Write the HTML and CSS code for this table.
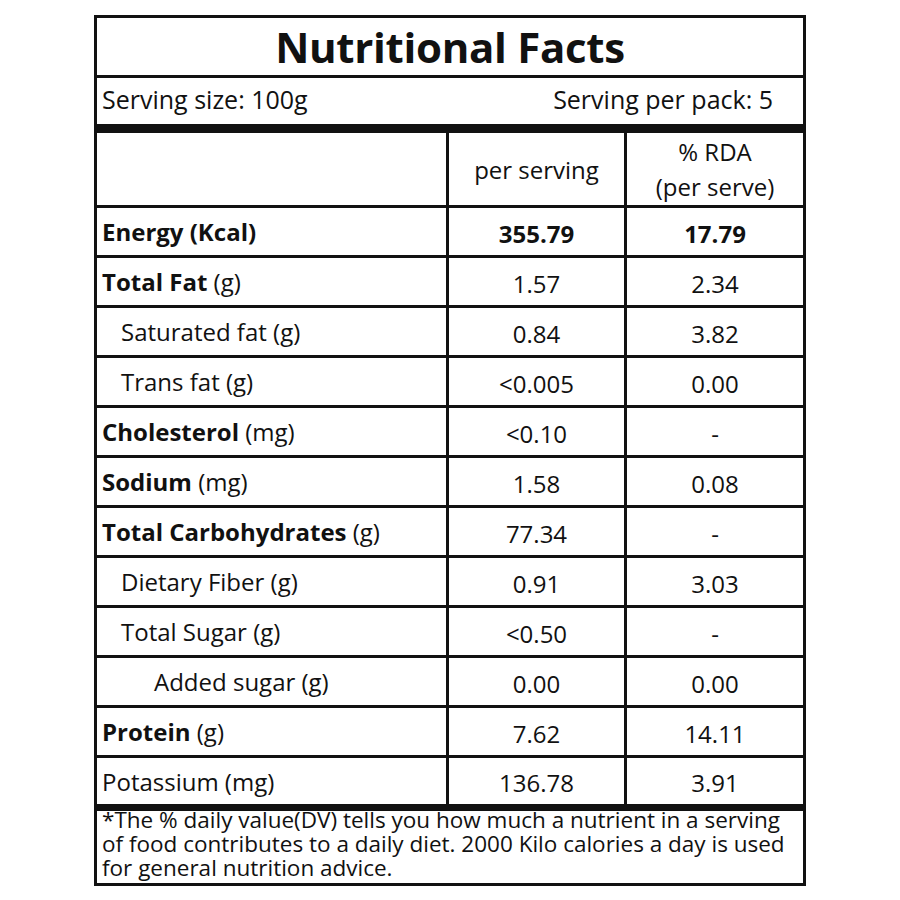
FILE: index.html
```html
<!DOCTYPE html>
<html>
<head>
<meta charset="utf-8">
<link rel="stylesheet" href="styles.css">
</head>
<body>
<div class="label">
  <h1 class="title">Nutritional Facts</h1>
  <div class="serving"><span>Serving size: 100g</span><span>Serving per pack: 5</span></div>
  <div class="table">
    <div class="row head">
      <div class="cell name"></div>
      <div class="cell val"><span>per serving</span></div>
      <div class="cell val"><span>% RDA<br>(per serve)</span></div>
    </div>
    <div class="row">
      <div class="cell name"><span><b>Energy (Kcal)</b></span></div>
      <div class="cell val"><span><b>355.79</b></span></div>
      <div class="cell val"><span><b>17.79</b></span></div>
    </div>
    <div class="row">
      <div class="cell name"><span><b>Total Fat</b> (g)</span></div>
      <div class="cell val"><span>1.57</span></div>
      <div class="cell val"><span>2.34</span></div>
    </div>
    <div class="row">
      <div class="cell name ind1"><span>Saturated fat (g)</span></div>
      <div class="cell val"><span>0.84</span></div>
      <div class="cell val"><span>3.82</span></div>
    </div>
    <div class="row">
      <div class="cell name ind1"><span>Trans fat (g)</span></div>
      <div class="cell val"><span>&lt;0.005</span></div>
      <div class="cell val"><span>0.00</span></div>
    </div>
    <div class="row">
      <div class="cell name"><span><b>Cholesterol</b> (mg)</span></div>
      <div class="cell val"><span>&lt;0.10</span></div>
      <div class="cell val"><span>-</span></div>
    </div>
    <div class="row">
      <div class="cell name"><span><b>Sodium</b> (mg)</span></div>
      <div class="cell val"><span>1.58</span></div>
      <div class="cell val"><span>0.08</span></div>
    </div>
    <div class="row">
      <div class="cell name"><span><b>Total Carbohydrates</b> (g)</span></div>
      <div class="cell val"><span>77.34</span></div>
      <div class="cell val"><span>-</span></div>
    </div>
    <div class="row">
      <div class="cell name ind1"><span>Dietary Fiber (g)</span></div>
      <div class="cell val"><span>0.91</span></div>
      <div class="cell val"><span>3.03</span></div>
    </div>
    <div class="row">
      <div class="cell name ind1"><span>Total Sugar (g)</span></div>
      <div class="cell val"><span>&lt;0.50</span></div>
      <div class="cell val"><span>-</span></div>
    </div>
    <div class="row">
      <div class="cell name ind2"><span>Added sugar (g)</span></div>
      <div class="cell val"><span>0.00</span></div>
      <div class="cell val"><span>0.00</span></div>
    </div>
    <div class="row">
      <div class="cell name"><span><b>Protein</b> (g)</span></div>
      <div class="cell val"><span>7.62</span></div>
      <div class="cell val"><span>14.11</span></div>
    </div>
    <div class="row last">
      <div class="cell name"><span>Potassium (mg)</span></div>
      <div class="cell val"><span>136.78</span></div>
      <div class="cell val"><span>3.91</span></div>
    </div>
  </div>
  <p class="note">*The % daily value(DV) tells you how much a nutrient in a serving<br>of food contributes to a daily diet. 2000 Kilo calories a day is used<br>for general nutrition advice.</p>
</div>
</body>
</html>
```

FILE: styles.css
```css
* { box-sizing: border-box; }
html, body { margin: 0; padding: 0; background: #fff; }
body {
  font-family: "Open Sans", "Noto Sans", "Liberation Sans", sans-serif;
  color: #111;
}
.label {
  margin: 15px 0 0 94px;
  width: 712px;
  height: 871px;
  border: 3px solid #111;
  display: flex;
  flex-direction: column;
}
.title {
  margin: 0;
  height: 60px;
  border-bottom: 3px solid #111;
  font-size: 42px;
  font-weight: 700;
  text-align: center;
  line-height: 57px;
  letter-spacing: -0.3px;
}
.serving {
  height: 55px;
  border-bottom: 9px solid #111;
  display: flex;
  justify-content: space-between;
  align-items: center;
  padding: 0 30px 4px 5px;
  font-size: 25px;
}
.table { display: flex; flex-direction: column; }
.row {
  display: grid;
  grid-template-columns: 352px 178px 176px;
  height: 50px;
  border-bottom: 3px solid #111;
  font-size: 24px;
}
.row.head { height: 75px; }
.row.last { height: 53px; border-bottom: 7px solid #111; }
.cell {
  display: flex;
  align-items: center;
}
.cell.name { padding-left: 5px; border-right: 3px solid #111; }
.cell.val { justify-content: center; text-align: center; border-right: 3px solid #111; padding-top: 3px; }
.cell.val:last-child { border-right: 0; }
.head .cell.val { line-height: 35px; padding-top: 0; }
.ind1 { padding-left: 24px !important; }
.ind2 { padding-left: 57px !important; }
b { font-weight: 700; }
.note {
  margin: -3px 0 0;
  padding: 0 6px 0 5px;
  font-size: 22.5px;
  line-height: 24px;
  white-space: nowrap;
}
```
